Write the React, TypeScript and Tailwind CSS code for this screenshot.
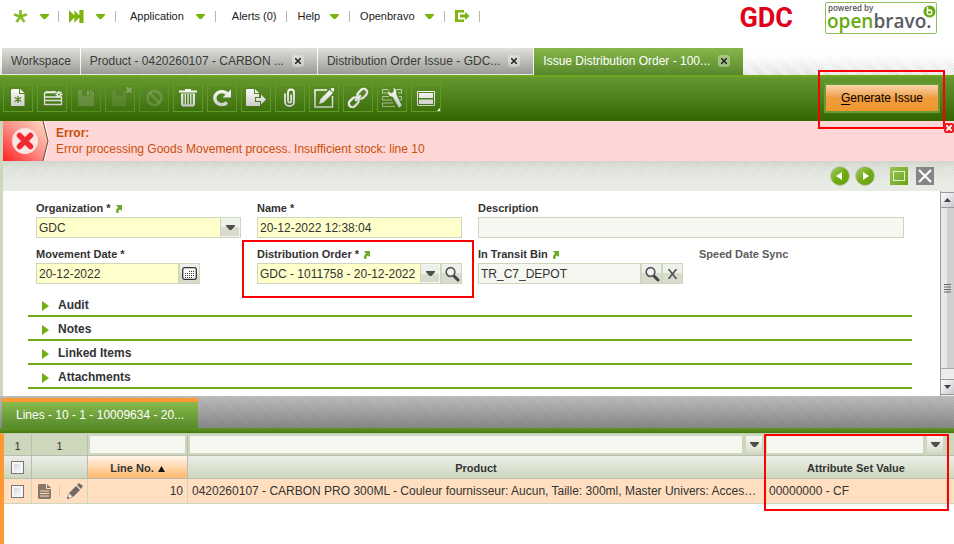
import React from 'react';

type Kids = { children?: React.ReactNode };

function Caret({ dark = false }: { dark?: boolean }) {
  return (
    <svg width="9" height="5" viewBox="0 0 9 5" className="pointer-events-none shrink-0" aria-hidden="true">
      <path d="M0 0h9v1L5.500 5h-2L0 1z" fill={dark ? '#4f5049' : '#7cb30f'} />
    </svg>
  );
}

function Sep() {
  return <span className="h-[11px] w-px shrink-0 bg-[#b5b5b5]" />;
}

function TopBar() {
  return (
    <header className="flex h-12 items-start justify-between">
      <nav className="flex h-8 items-center pl-[13px] text-[11px] leading-4 text-[#1a1a1a]">
        <button aria-label="Quick create" className="flex w-[45px] items-center gap-3">
          <svg width="15" height="14" viewBox="0 0 15 14">
            <path d="M7.500 7.500V1M7.500 7.500L1 5.500M7.500 7.500L14 5.500M7.500 7.500L3.500 13M7.500 7.500L11.500 13" stroke="#84bb26" strokeWidth="2.600" fill="none" />
          </svg>
          <Caret />
        </button>
        <Sep />
        <button aria-label="Quick launch" className="flex w-[56px] items-center gap-3 pl-[10px]">
          <svg width="15" height="13" viewBox="0 0 15 13">
            <path d="M0 0l5 5V0l5 5V0h4.500v13H10V8l-5 5V8l-5 5z" fill="#7cb30f" />
            <path d="M5 0v5M10 0v5M5 8v5M10 8v5" stroke="#fff" strokeWidth=".7" />
          </svg>
          <Caret />
        </button>
        <Sep />
        <button className="flex items-center gap-3 pr-[10px] pl-[14px]">Application<Caret /></button>
        <Sep />
        <button className="pr-[10px] pl-4">Alerts (0)</button>
        <Sep />
        <button className="flex items-center gap-[10px] pr-[10px] pl-[10px]">Help<Caret /></button>
        <Sep />
        <button className="flex items-center gap-[10px] pr-[10px] pl-[10px]">Openbravo<Caret /></button>
        <Sep />
        <button aria-label="Log out" className="pr-[9px] pl-[10px]">
          <svg width="15" height="12" viewBox="0 0 15 12">
            <path d="M9 0H0v12h9V9.500H3v-7h6z" fill="#7cb30f" />
            <path d="M5 4.500h5V2l4.500 4L10 10V7.500H5z" fill="#7cb30f" />
          </svg>
        </button>
        <Sep />
      </nav>
      <div className="flex pr-[17px]">
        <div className="mr-8 pt-[2px] font-['Liberation_Sans_Narrow','Roboto',sans-serif] text-[27px] leading-8 font-bold text-[#e2001a]">GDC</div>
        <div className="relative mt-[2px] h-8 w-[112px] rounded-[2px] border border-[#8dc05a] bg-white">
          <div className="pl-[2px] font-['Open_Sans',sans-serif] text-[8px] leading-[10px] font-semibold text-[#555]">powered by</div>
          <div className="pl-px font-['Open_Sans',sans-serif] text-[19px] leading-[17px] font-semibold text-[#5a5b5d]">
            <span className="text-[#67aa0f]">open</span>bravo.
          </div>
          <svg className="absolute top-[2px] right-0" width="13" height="13" viewBox="0 0 13 13">
            <circle cx="6.500" cy="6.500" r="6" fill="#67aa0f" />
            <path d="M4.500 2v5" stroke="#fff" strokeWidth="1.500" />
            <circle cx="6.500" cy="7.300" r="2.300" stroke="#fff" strokeWidth="1.400" fill="none" />
          </svg>
        </div>
      </div>
    </header>
  );
}

function Tab({ title, active = false, closable = true }: { title: string; active?: boolean; closable?: boolean }) {
  return (
    <div
      className={
        active
          ? 'flex h-[27px] items-center gap-2 bg-[repeating-linear-gradient(45deg,#0000_0_1px,#00000008_1px_2px),linear-gradient(#8aba4d,#588a2c)] px-[9px] pb-px text-white'
          : 'mr-px flex h-[26px] items-center gap-2 bg-linear-to-b from-[#dfe1da] to-[#999b94] px-[9px] text-[#3a3a38]'
      }
    >
      <button role="tab" aria-selected={active} className="whitespace-nowrap">{title}</button>
      {closable && (
        <button aria-label={`Close ${title}`} className="mr-1 flex size-3 items-center justify-center rounded-[3px] bg-white/35">
          <svg width="6" height="6" viewBox="0 0 6 6"><path d="M0 0l6 6M6 0L0 6" stroke="#222" strokeWidth="1.500" /></svg>
        </button>
      )}
    </div>
  );
}

function Tool({ label, children, off = false }: Kids & { label: string; off?: boolean }) {
  return (
    <button
      aria-label={label}
      disabled={off}
      className={off ? 'h-7 w-[30px] border border-[#5f9a24]/70' : 'h-7 w-[30px] border border-[#5f9a24]'}
    >
      <svg width="30" height="28" viewBox="0 0 30 28" className="-m-px" fill="none">{children}</svg>
    </button>
  );
}

const steel = 'url(#steel)';
const faint = '#b4bfa6';

function Toolbar() {
  return (
    <div className="flex h-[46px] items-center justify-between border-t-2 border-[#70a51d] bg-linear-to-b from-[#66982f] to-[#336600] pr-[14px] pb-[2px] pl-[3px]">
      <svg width="0" height="0" className="absolute">
        <defs>
          <linearGradient id="steel" gradientUnits="userSpaceOnUse" x1="0" y1="4" x2="0" y2="24">
            <stop offset="0" stopColor="#fff" />
            <stop offset="1" stopColor="#c6c8c4" />
          </linearGradient>
        </defs>
      </svg>
      <div className="flex gap-1">
        <Tool label="New record">
          <path d="M9 5h7v5h5.500v12H8V6z" fill={steel} />
          <path d="M17 5l4.500 4H17z" fill={steel} />
          <path d="M15 12v7M11.800 13.600l6.400 3.800M18.200 13.600l-6.400 3.800" stroke="#4a8012" strokeWidth="1.200" />
        </Tool>
        <Tool label="New row in grid">
          <path d="M19 8H9L7.500 9.500v11h17V13M8 13h16M8 16.500h16M9 8.500h9" stroke={steel} strokeWidth="1.300" />
          <path d="M22 7v7M18.500 10.500h7M19.500 8l5 5M24.500 8l-5 5" stroke={steel} strokeWidth="1.400" />
          <circle cx="22" cy="10.500" r="1" fill="#4a8012" />
        </Tool>
        <Tool label="Save" off>
          <path d="M7 6h13l3 3v13H7z" fill={faint} opacity=".27" />
          <path d="M11 6h8v6h-8z" fill="#477a1a" opacity=".6" />
          <path d="M16 7h2v4h-2z" fill={faint} opacity=".5" />
        </Tool>
        <Tool label="Save and close" off>
          <path d="M7 7h12l2 3v12H7z" fill={faint} opacity=".15" />
          <path d="M11 7h7v5h-7z" fill="#477a1a" opacity=".4" />
          <path d="M21.500 3.500l5 5M26.500 3.500l-5 5" stroke={faint} strokeWidth="2.200" opacity=".5" />
        </Tool>
        <Tool label="Undo" off>
          <circle cx="15.500" cy="14" r="7" stroke={faint} strokeWidth="2.800" opacity=".27" />
          <path d="M10.500 9l10 10" stroke={faint} strokeWidth="2.800" opacity=".27" />
        </Tool>
        <Tool label="Delete">
          <path d="M6 6.500h6V5h6v1.500h6v2H6z" fill={steel} />
          <path d="M8 9.500v11l1.500 2h11l1.500-2v-11z" fill={steel} />
          <path d="M11 10v10.500M13.700 10v10.500M16.400 10v10.500M19.100 10v10.500" stroke="#45790f" strokeWidth="1.200" />
        </Tool>
        <Tool label="Refresh">
          <path d="M20 18.500a7 6.500 0 1 1 .2-8.500" stroke={steel} strokeWidth="3.400" />
          <path d="M24 5.500v8h-8.500z" fill={steel} />
        </Tool>
        <Tool label="Export">
          <path d="M5 6l1-1h7v5h5v3h-4v5h5v4H5z" fill={steel} />
          <path d="M14 5l4 4h-4zM15 14h5v-3.500l5 5-5 5V17h-5z" fill={steel} />
        </Tool>
        <Tool label="Attachments">
          <path d="M10 9.500v8.500a4.500 4 0 0 0 9 0V8.500a3 3 0 0 0-6 0V17a1.600 1.600 0 0 0 3.200 0v-6.500" stroke={steel} strokeWidth="1.800" />
        </Tool>
        <Tool label="Edit">
          <path d="M18 6H6v17h17.500V12" stroke={steel} strokeWidth="1.500" />
          <path d="M10 20l1.500-5 9-9 3.500 3-9.500 9.500z" fill={steel} />
          <path d="M21.500 5l1.500-1h2v2.500L24 8z" fill={steel} />
        </Tool>
        <Tool label="Link">
          <g transform="rotate(-45 15 14)" stroke={steel} strokeWidth="2.300">
            <rect x="3.500" y="10.500" width="11" height="7" rx="3.500" />
            <rect x="15.500" y="10.500" width="11" height="7" rx="3.500" />
            <path d="M11 14h8" />
          </g>
        </Tool>
        <Tool label="Settings">
          <path d="M12 5.500H5.500v3.500H12M19 5.500h5.500v3.500H21M12 12.500H5.500v3.500H15M22 12.500h2.500v3.500H22M16 19H5.500v3.500H18" stroke={steel} strokeWidth="1" opacity=".65" />
          <path d="M11.500 4v3.500l3 1.500 2-1.500L16 3.500c3 1 4 3 3.500 6.500L25 21.500 22 24l-6.500-11c-4 0-6-4-4-9z" fill={steel} stroke="#46790f" strokeWidth=".5" />
        </Tool>
        <Tool label="Layout">
          <path d="M6.500 7.500h17v14h-17z" stroke={steel} />
          <path d="M8 9h14v5H8zM8 15.500h14v4.500H8z" fill={steel} />
          <path d="M29 24v3h-3z" fill="#fff" />
        </Tool>
      </div>
      <div className="relative">
        <button className="block h-[30px] w-[116px] border-2 border-[#679b33] bg-linear-to-b from-[#f9d6ac] via-[#f09c3e] to-[#f0962d] text-xs text-black">
          <u className="underline-offset-2">G</u>enerate Issue
        </button>
        <div className="pointer-events-none absolute -top-[13px] -right-[5px] -bottom-4 -left-[6px] z-10 border-2 border-[#ff0000]" />
      </div>
    </div>
  );
}

function ErrorMessage() {
  return (
    <div role="alert" className="relative flex h-10 items-center bg-[#ffd6d6] text-xs leading-4 text-[#c8500a]">
      <svg width="46" height="40" viewBox="0 0 46 40" className="mr-[7px] shrink-0">
        <defs>
          <linearGradient id="alarm" x1="0" y1="1" x2="1" y2="0">
            <stop offset="0" stopColor="#ff2020" />
            <stop offset=".5" stopColor="#fb8f88" />
            <stop offset="1" stopColor="#ffe0c8" />
          </linearGradient>
        </defs>
        <path d="M0 0h40l5.500 20L40 40H0z" fill="url(#alarm)" />
        <path d="M41.500 0l4 20-4 20" stroke="#fff" fill="none" />
        <path d="M40 0l5 20-5 20" stroke="#6b4a2e" fill="none" />
        <circle cx="22" cy="20" r="13" fill="#ffe4e4" />
        <path d="M16.500 14.500l11 11M27.500 14.500l-11 11" stroke="#f02a2e" strokeWidth="5.500" strokeLinecap="round" />
      </svg>
      <div>
        <div className="font-bold">Error:</div>
        <div>Error processing Goods Movement process. Insufficient stock: line 10</div>
      </div>
      <button aria-label="Dismiss" className="absolute top-[2px] right-0 z-20 flex size-[10px] items-center justify-center rounded-[2px] bg-[#ee1c25]">
        <svg width="6" height="6" viewBox="0 0 6 6"><path d="M0 0l6 6M6 0L0 6" stroke="#fff" strokeWidth="1.800" /></svg>
      </button>
    </div>
  );
}

function RoundArrow({ label, back = false }: { label: string; back?: boolean }) {
  return (
    <button aria-label={label}>
      <svg width="20" height="20" viewBox="0 0 20 20">
        <defs>
          <linearGradient id="leaf" x1="0" y1="0" x2="1" y2="1">
            <stop offset="0" stopColor="#a8cc6c" />
            <stop offset=".5" stopColor="#72ac17" />
            <stop offset="1" stopColor="#62a008" />
          </linearGradient>
        </defs>
        <circle cx="10" cy="10" r="9.300" fill="url(#leaf)" stroke="#a9b69a" strokeWidth=".7" />
        <path d={back ? 'M12 6v8l-6-4z' : 'M8 6v8l6-4z'} fill="#fff" />
      </svg>
    </button>
  );
}

function RecordBar() {
  return (
    <div className="flex h-[30px] items-center justify-end bg-[linear-gradient(#c4c9c180,#e8ebe300_25%,#e8ebe3_70%),repeating-linear-gradient(135deg,#dadeD6_0_1px,#e4e7e0_1px_2px)] pr-5">
      <div className="flex gap-[5px]">
        <RoundArrow label="Previous record" back />
        <RoundArrow label="Next record" />
      </div>
      <button aria-label="Maximize" className="ml-[15px] flex size-[18px] items-center justify-center bg-linear-to-br from-[#98c450] to-[#69a50e]">
        <span className="h-[10px] w-3 border border-white/80" />
      </button>
      <button aria-label="Close record" className="ml-2 flex size-[18px] items-center justify-center bg-[#858585]">
        <svg width="14" height="14" viewBox="0 0 14 14"><path d="M1 1l12 12M13 1L1 13" stroke="#fff" strokeWidth="2.200" /></svg>
      </button>
    </div>
  );
}

function LinkOut() {
  return (
    <svg width="7" height="8" viewBox="0 0 7 8" className="ml-1 inline-block" aria-hidden="true">
      <path d="M1 0h6v6L5 4.500Q3 5 3.500 8H1.500Q0 5 3 2.500z" fill="#6bab2c" />
    </svg>
  );
}

function Label({ id, text, link = false, dim = false }: { id?: string; text: string; link?: boolean; dim?: boolean }) {
  return (
    <label htmlFor={id} className={dim ? 'mb-px block h-4 text-[11px] leading-4 font-bold text-[#5c5c5c]' : 'mb-px block h-4 text-[11px] leading-4 font-bold text-[#333]'}>
      {text}
      {link && <LinkOut />}
    </label>
  );
}

const shell = 'flex h-[21px] border border-[#cdd7bb]';
const field = 'h-full w-full min-w-0 appearance-none px-[2px] text-xs leading-4 text-[#333] outline-none';
const mini = 'pointer-events-none flex w-5 shrink-0 items-center justify-center border border-[#f4f6f2] border-l-[#cdd7bb] bg-linear-to-b from-[#eef0ea] from-50% to-[#d8dccf] to-50%';
const press = 'flex w-[21px] shrink-0 items-center justify-center border-l-2 border-[#cdd7bb] bg-linear-to-b from-[#eef0ea] from-50% to-[#d8dccf] to-50%';

function Lens() {
  return (
    <svg width="16" height="16" viewBox="0 0 16 16">
      <path d="M9 9l5 5" stroke="#444" strokeWidth="3" strokeLinecap="round" />
      <circle cx="6.500" cy="6" r="4.300" fill="#f3f5f5" stroke="#555" strokeWidth="1.700" />
    </svg>
  );
}

function Scrollbar() {
  return (
    <div className="flex w-[14px] shrink-0 flex-col border-l border-[#9c9c9c] bg-[#ededed]" aria-hidden="true">
      <div className="mt-px flex h-4 items-center justify-center border border-r-0 border-l-0 border-[#999] bg-linear-to-br from-white to-[#c9c9d0]">
        <svg width="7" height="4" viewBox="0 0 7 4"><path d="M3.500 0L7 4H0z" fill="#444" /></svg>
      </div>
      <div className="flex h-[161px] items-center justify-center border-b border-[#aaa] bg-linear-to-r from-[#e8e8e8] from-50% to-[#d0d0d0] to-50%">
        <svg width="7" height="9" viewBox="0 0 7 9"><path d="M0 .5h7M0 3h7M0 5.500h7M0 8h7" stroke="#666" /></svg>
      </div>
      <div className="flex-1" />
      <div className="mb-px flex h-4 items-center justify-center border-t border-b border-[#999] bg-linear-to-br from-white to-[#c9c9d0]">
        <svg width="7" height="4" viewBox="0 0 7 4"><path d="M3.500 4L7 0H0z" fill="#444" /></svg>
      </div>
    </div>
  );
}

function RecordForm() {
  return (
    <div className="flex bg-white">
      <form className="min-w-0 flex-1 pt-[9px] pb-[7px]">
        <div className="grid grid-cols-4 gap-x-4 gap-y-2 pr-9 pl-[33px]">
          <div>
            <Label id="org" text="Organization *" link />
            <div className={`${shell} bg-[#ffffcc]`}>
              <select id="org" className={field}><option>GDC</option></select>
              <span className={mini}><Caret dark /></span>
            </div>
          </div>
          <div>
            <Label id="name" text="Name *" />
            <div className={`${shell} bg-[#ffffcc]`}><input id="name" className={field} defaultValue="20-12-2022 12:38:04" /></div>
          </div>
          <div className="col-span-2">
            <Label id="desc" text="Description" />
            <div className={`${shell} bg-[#f5f7f0]`}><input id="desc" className={field} /></div>
          </div>
          <div>
            <Label id="date" text="Movement Date *" />
            <div className={`${shell} w-4/5 bg-[#ffffcc]`}>
              <input id="date" className={field} defaultValue="20-12-2022" />
              <button type="button" aria-label="Pick date" className={press}>
                <svg width="15" height="13" viewBox="0 0 15 13">
                  <rect x=".7" y=".7" width="13.600" height="11.600" rx="2" fill="#fff" stroke="#333" strokeWidth="1.300" />
                  <path d="M7 4.500h5M3 6.500h9M3 8.500h9M3 10.500h8" stroke="#333" strokeDasharray="1 1" />
                </svg>
              </button>
            </div>
          </div>
          <div className="relative">
            <Label id="order" text="Distribution Order *" link />
            <div className={`${shell} bg-[#ffffcc]`}>
              <select id="order" className={field}><option>GDC - 1011758 - 20-12-2022</option></select>
              <span className={mini}><Caret dark /></span>
              <button type="button" aria-label="Search order" className={press}><Lens /></button>
            </div>
            <div className="pointer-events-none absolute -top-[6px] -right-3 -bottom-[14px] -left-[15px] border-2 border-[#ff0000]" />
          </div>
          <div>
            <Label id="bin" text="In Transit Bin" link />
            <div className={`${shell} bg-[#f5f7f0]`}>
              <input id="bin" className={field} defaultValue="TR_C7_DEPOT" />
              <button type="button" aria-label="Search bin" className={press}><Lens /></button>
              <button type="button" aria-label="Clear bin" className={press}>
                <svg width="9" height="10" viewBox="0 0 9 10"><path d="M.5 0l8 10M8.500 0l-8 10" stroke="#555" strokeWidth="1.600" /></svg>
              </button>
            </div>
          </div>
          <div><Label text="Speed Date Sync" dim /></div>
        </div>
        <div className="mt-[9px] mr-7 ml-[25px]">
          {['Audit', 'Notes', 'Linked Items', 'Attachments'].map((name) => (
            <button type="button" key={name} className="flex h-6 w-full items-center gap-[9px] border-b-2 border-[#74aa18] pt-[2px] pl-[14px] text-left text-xs font-bold text-[#333]">
              <svg width="7" height="10" viewBox="0 0 7 10" className="mt-[2px]"><path d="M0 0l7 5-7 5z" fill="#74aa18" /></svg>
              {name}
            </button>
          ))}
        </div>
      </form>
      <Scrollbar />
    </div>
  );
}

const headCell = 'border-r border-b border-[#b9bdb3] bg-linear-to-b from-[#eceee9] to-[#cdd7bb] p-0 pt-px text-[11px] font-bold text-[#333]';
const rowCell = 'border-r border-b border-[#cdd7bb] bg-[#ffdfbf] p-0';
const filterCell = 'border-r border-b border-[#b9bdb3] bg-[#cdd7bb] p-0';
const countCell = 'border-r border-b border-[#b9bdb3] bg-[#cdd7bb] p-0 pt-[2px] text-[11px]';
const filterBox = 'block h-[21px] w-full min-w-0 appearance-none border-2 border-[#cdd7bb] bg-[#f5f7f0] outline-none';

function Tick({ label }: { label: string }) {
  return (
    <input
      type="checkbox"
      aria-label={label}
      className="mx-auto block size-[13px] appearance-none border border-[#777] bg-linear-to-br from-[#ccd0d6] to-white shadow-[inset_0_0_0_2px_#f6f6f6]"
    />
  );
}

function FilterSelect({ label }: { label: string }) {
  return (
    <div className="flex">
      <input aria-label={label} className={filterBox} />
      <button aria-label={`${label} options`} className="flex h-[21px] w-5 shrink-0 items-center justify-center border-2 border-[#cdd7bb] bg-linear-to-b from-[#f7f8f4] to-[#d6dccb]">
        <Caret dark />
      </button>
    </div>
  );
}

function LinesGrid() {
  return (
    <div className="relative min-h-[111px] border-t border-l-4 border-t-[#c5cbbb] border-l-[#ff9933] bg-white">
      <table className="w-full table-fixed border-separate border-spacing-0 text-xs leading-4 text-[#333]">
        <colgroup>
          <col className="w-7" />
          <col className="w-14" />
          <col className="w-[100px]" />
          <col />
          <col className="w-[182px]" />
          <col className="w-[7px]" />
        </colgroup>
        <thead>
          <tr className="h-[22px] text-center">
            <td className={countCell}>1</td>
            <td className={countCell}>1</td>
            <td className={filterCell}><input aria-label="Filter line number" className={filterBox} /></td>
            <td className={filterCell}><FilterSelect label="Filter product" /></td>
            <td className={`${filterCell} border-r-0 pr-[2px]`}><FilterSelect label="Filter attribute set value" /></td>
            <td className={`${filterCell} border-r-0`} />
          </tr>
          <tr className="h-[23px]">
            <th className={headCell}><Tick label="Select all" /></th>
            <th className={headCell} />
            <th className="border-r border-b border-[#b9bdb3] bg-linear-to-b from-[#fff6ec] to-[#ffb767] p-0 pt-px text-[11px] font-bold text-[#333]">
              Line No.
              <svg width="7" height="6" viewBox="0 0 7 6" className="ml-1 inline-block align-[0px]"><path d="M3.500 0L7 6H0z" fill="#111" /></svg>
            </th>
            <th className={headCell}>Product</th>
            <th className={`${headCell} border-r-0`}>Attribute Set Value</th>
            <th className={`${headCell} border-r-0`} />
          </tr>
        </thead>
        <tbody>
          <tr className="h-[25px]">
            <td className={rowCell}><Tick label="Select line 10" /></td>
            <td className={rowCell}>
              <div className="flex items-center justify-between pr-1 pl-[6px]">
                <button aria-label="Open line">
                  <svg width="13" height="15" viewBox="0 0 13 15" className="block">
                    <path d="M1 0h7v5h5v9l-1 1H1l-1-1V1zM9 0l4 4H9z" fill="#857868" />
                    <path d="M2 7h9M2 9.500h9M2 12h9" stroke="#ffdfbf" />
                  </svg>
                </button>
                <span className="h-[11px] w-px bg-[#d3cfb2]" />
                <button aria-label="Edit line">
                  <svg width="16" height="16" viewBox="0 0 16 16" className="block">
                    <path d="M2 10l7-7 4 4-7 7zM10 2l2-2 4 3-2 3z" fill="#6f6a64" />
                    <path d="M2 10.500L0 16l5.500-2z" fill="#fff" stroke="#8a8178" strokeWidth=".7" />
                    <path d="M0 16l1-2.500L2.500 15z" fill="#555" />
                  </svg>
                </button>
              </div>
            </td>
            <td className={`${rowCell} pr-1 text-right`}>10</td>
            <td className={`${rowCell} truncate pr-1 pl-1`}>
              0420260107 - CARBON PRO 300ML - Couleur fournisseur: Aucun, Taille: 300ml, Master Univers: Accessoires
            </td>
            <td className={`${rowCell} pl-1`}>00000000 - CF</td>
            <td className={`${rowCell} border-r-0`} />
          </tr>
        </tbody>
      </table>
      <div className="pointer-events-none absolute top-0 right-[5px] h-[77px] w-[185px] border-2 border-[#ff0000]" />
    </div>
  );
}

export default function App() {
  return (
    <div className="min-h-screen bg-white font-['Liberation_Sans',Arial,sans-serif] text-xs">
      <TopBar />
      <div role="tablist" className="flex h-[27px] bg-[linear-gradient(#fff_25%,#ffffff40),repeating-linear-gradient(45deg,#d0d0d0_0_1px,#f0f0f0_1px_2px)] pl-[2px]">
        <Tab title="Workspace" closable={false} />
        <Tab title="Product - 0420260107 - CARBON ..." />
        <Tab title="Distribution Order Issue - GDC..." />
        <Tab title="Issue Distribution Order - 100..." active />
      </div>
      <Toolbar />
      <main className="border-l-[3px] border-[#cdd7bb]">
        <ErrorMessage />
        <RecordBar />
        <RecordForm />
      </main>
      <div className="flex h-8 items-end bg-[repeating-linear-gradient(45deg,#0000_0_1px,#0000000a_1px_2px),linear-gradient(#bebebe,#888)] pl-[2px]">
        <button role="tab" aria-selected="true" className="h-[30px] border-t-4 border-[#ff9933] bg-linear-to-b from-[#8aba4d] to-[#568a2a] px-[14px] text-xs text-white">
          Lines - 10 - 1 - 10009634 - 20...
        </button>
      </div>
      <div className="h-[5px] bg-linear-to-b from-[#639427] to-[#447a0c]" />
      <LinesGrid />
    </div>
  );
}
